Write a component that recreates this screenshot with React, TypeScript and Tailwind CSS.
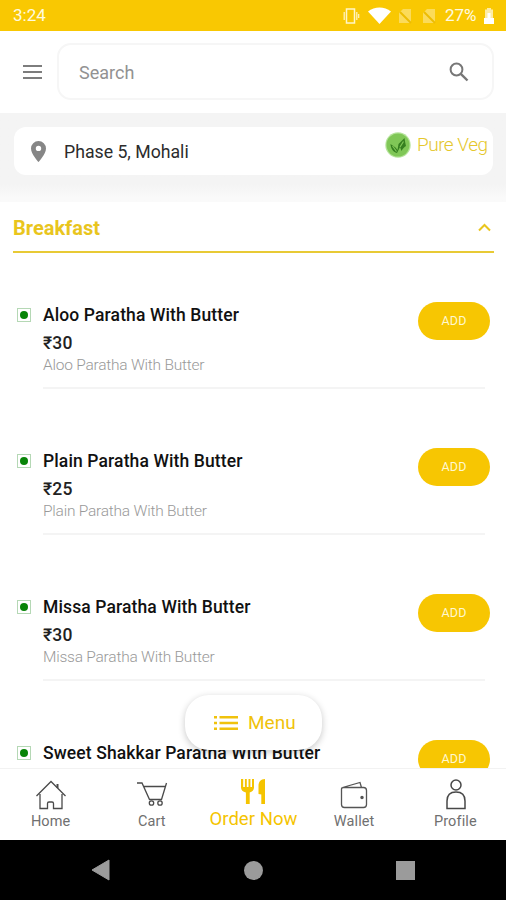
import React from 'react';

interface MenuItem {
  name: string;
  price: number;
}

interface TabProps {
  label: string;
  children: React.ReactNode;
}

const items: MenuItem[] = [
  { name: 'Aloo Paratha With Butter', price: 30 },
  { name: 'Plain Paratha With Butter', price: 25 },
  { name: 'Missa Paratha With Butter', price: 30 },
  { name: 'Sweet Shakkar Paratha With Butter', price: 35 },
];

const NoSimIcon = () => (
  <svg width="14" height="16" viewBox="0 0 14 16" className="opacity-35">
    <path d="M5 1h8v14H1V5z" fill="#fff" />
    <path d="M2 4l11 11" stroke="#d9a800" strokeWidth="2" />
  </svg>
);

const StatusBar = () => (
  <div className="flex h-[31px] shrink-0 items-center bg-[#f9c802] pl-[13px] pr-[12px] text-[17px] text-[#fffbe0]">
    <span className="w-[36px]">3:24</span>
    <div className="ml-auto flex items-center">
      <svg width="17" height="16" viewBox="0 0 17 16" fill="none" stroke="#fff6c8" strokeWidth="1.5" className="mr-[-1px]">
        <rect x="3.5" y="1" width="8" height="14" />
        <path d="M1.2 4v8M13.8 4v8M15.7 6v4" strokeWidth="1.2" />
      </svg>
      <svg width="23" height="17" viewBox="0 0 23 17" className="ml-[9px]">
        <path d="M0 4.6C6.5-.8 16.5-.8 23 4.6L11.5 17z" fill="#fff" />
      </svg>
      <span className="ml-[7px]"><NoSimIcon /></span>
      <span className="ml-[10px]"><NoSimIcon /></span>
      <span className="ml-[9px] w-[33px] whitespace-nowrap">27%</span>
      <svg width="10" height="16" viewBox="0 0 10 16" className="ml-[6px]">
        <path d="M3 0h4v1.5h2V10H1V1.5h2z" fill="#fff" opacity=".65" />
        <path d="M3.5 5h3v5H10v6H0v-6h3.5z" fill="#fff" />
      </svg>
    </div>
  </div>
);

const SearchHeader = () => (
  <div className="flex h-[82px] shrink-0 items-center pl-[23px] pr-[12px]">
    <div className="flex w-[19px] flex-col gap-[4px]">
      <div className="h-[2px] bg-[#7d7d7d]" />
      <div className="h-[2px] bg-[#7d7d7d]" />
      <div className="h-[2px] bg-[#7d7d7d]" />
    </div>
    <div className="mb-px ml-[15px] flex h-[57px] flex-1 items-center rounded-[14px] border-2 border-[#f6f6f6] pl-[20px] pr-[23px]">
      <span className="pt-px text-[18px] text-[#929292]">Search</span>
      <svg width="20" height="20" viewBox="0 0 20 20" fill="none" stroke="#777" className="ml-auto">
        <circle cx="7.5" cy="7.5" r="5.9" strokeWidth="2" />
        <path d="M11.8 11.8l6.7 6.7" strokeWidth="2.4" />
      </svg>
    </div>
  </div>
);

const LocationBar = () => (
  <div className="h-[89px] shrink-0 bg-linear-to-b from-[#f4f4f4] from-80% to-[#fafafa] to-95% pl-[14px] pr-[13px] pt-[14px]">
    <div className="flex h-[48px] items-center rounded-[12px] bg-white pl-[17px] pr-[5px]">
      <svg width="15" height="21" viewBox="0 0 15 21">
        <path d="M7.5 0A7.5 7.5 0 0 0 0 7.5C0 13 7.5 21 7.5 21S15 13 15 7.5A7.5 7.5 0 0 0 7.5 0zm0 10.1a2.7 2.7 0 1 1 0-5.4 2.7 2.7 0 0 1 0 5.4z" fill="#868686" />
      </svg>
      <span className="ml-[18px] pt-[2px] text-[17.7px] text-[#2c2c2c]">Phase 5, Mohali</span>
      <div className="mb-[12px] ml-auto flex items-center">
        <svg width="26" height="26" viewBox="0 0 26 26">
          <circle cx="13" cy="13" r="12.7" fill="#b5e39b" />
          <circle cx="13" cy="13" r="11.5" fill="#80c757" />
          <path d="M12 21C8 20 5.8 16.5 5.5 12l5 3.5L12.5 18l1-6L19.5 6c.6 3 .8 5.5 1.500 8-2 1-3.500 3-4.500 5l-1.500-4z" fill="#357f20" />
          <path d="M7.5 14l4 5.5M18.5 9.5L15 15" stroke="#80c757" strokeWidth="1.2" fill="none" />
        </svg>
        <span className="ml-[6px] w-[71px] whitespace-nowrap text-[19px] font-light tracking-[-0.5px] text-[#e5c72c]">Pure Veg</span>
      </div>
    </div>
  </div>
);

const MenuRow: React.FC<{ item: MenuItem }> = ({ item }) => (
  <div className="flex h-[145.9px] shrink-0 pl-[17px] pr-[16px]">
    <div className="mt-[8px] flex h-[14px] w-[14px] items-center justify-center border border-[#b5d8b5]">
      <div className="h-[8px] w-[8px] rounded-full bg-[#078407]" />
    </div>
    <div className="ml-[12px] h-[89px] w-[375px] border-b-2 border-[#f4f4f4] whitespace-nowrap">
      <p className="h-[29px] text-[17.5px] leading-[30px] font-medium tracking-[0.12px] text-[#111]">{item.name}</p>
      <p className="h-[26px] text-[17.5px] leading-[28px] font-medium tracking-[0.2px] text-[#222]">₹{item.price}</p>
      <p className="text-[15.5px] leading-[21px] font-light tracking-[-0.23px] text-[#999]">{item.name}</p>
    </div>
    <div className="h-[89px] w-[67px] border-b-2 border-[#f4f4f4]">
      <button className="mt-[2px] h-[38px] w-[72px] rounded-full bg-[#f7c602] pt-px text-[12.5px] tracking-[0.2px] text-[#fff8d0]">ADD</button>
    </div>
  </div>
);

const Tab: React.FC<TabProps> = ({ label, children }) => (
  <div className="flex w-1/5 flex-col items-center pt-[10px]">
    <div className="flex h-[32px] items-center">{children}</div>
    <span className="text-[14.5px] leading-[22px] tracking-[0.1px] text-[#707070]">{label}</span>
  </div>
);

const BottomTabs = () => (
  <div className="flex h-[72px] shrink-0 border-t border-[#f2f2f2] bg-white">
    <Tab label="Home">
      <svg width="32" height="32" viewBox="0 0 32 32" fill="none" stroke="#4a4a4a" strokeWidth="1.3">
        <path d="M1.5 17L16 2.5 30.5 17M5 15v14.5h7.5v-5q0-1.5 1.5-1.5h3q1.5 0 1.5 1.5v5H27V15" />
        <path d="M22.5 9V5" strokeWidth="2" />
      </svg>
    </Tab>
    <Tab label="Cart">
      <svg width="32" height="32" viewBox="0 0 32 32" fill="none" stroke="#4a4a4a" strokeWidth="1.3">
        <path d="M1 4h5l7.500 16.5h12L30.5 4M7.5 7.5h21.7" />
        <circle cx="15.5" cy="24" r="2.2" />
        <circle cx="24" cy="24" r="2.2" />
      </svg>
    </Tab>
    <div className="flex w-1/5 flex-col items-center pt-[9px] text-[#f5c400]">
      <svg width="26" height="28" viewBox="0 0 26 28" fill="currentColor">
        <path d="M1 1h2.2v8h1.7V1h1.9v8h1.7V1h1.9v8H12V1h2v8.500c0 2.800-1.800 4.300-4.300 5V26H5.900V14.500C2.800 13.800 1 12.300 1 9.500z" />
        <path d="M25 1v25h-3.700v-9.500L18.5 16V8C18.500 4 20.500 1 25 1z" />
      </svg>
      <span className="pl-px text-[18.5px] leading-[26px] tracking-[0.05px] whitespace-nowrap">Order Now</span>
    </div>
    <Tab label="Wallet">
      <svg width="28" height="30" viewBox="0 0 28 30" fill="none" stroke="#555" strokeWidth="1.3">
        <path d="M1.5 9v15.500q0 3 3 3h19q3 0 3-3v-14q0-3-3-3H3.500Q1.500 7.500 1.500 9M2.500 7.500L20 2.500l1.500 5" />
        <circle cx="22" cy="17.5" r="1.1" fill="#555" />
      </svg>
    </Tab>
    <Tab label="Profile">
      <svg width="22" height="32" viewBox="0 0 22 32" fill="none" stroke="#484848" strokeWidth="1.5" className="ml-px">
        <circle cx="11" cy="6" r="5" />
        <path d="M2 29.5V22c0-6 3.500-9 9-9s9 3 9 9v7.500z" />
      </svg>
    </Tab>
  </div>
);

const SystemNav = () => (
  <div className="flex h-[60px] shrink-0 items-center bg-black">
    <svg width="19" height="22" viewBox="0 0 19 22" className="ml-[91px]">
      <path d="M18 1v20L1 11z" fill="#9b9b9b" stroke="#9b9b9b" strokeLinejoin="round" />
    </svg>
    <div className="ml-[134px] h-[19px] w-[19px] rounded-full bg-[#9b9b9b]" />
    <div className="ml-[133px] h-[19px] w-[19px] bg-[#9b9b9b]" />
  </div>
);

export default function App() {
  return (
    <div className="relative flex h-[900px] w-[506px] flex-col overflow-hidden bg-white font-[Roboto,sans-serif]">
      <StatusBar />
      <SearchHeader />
      <LocationBar />
      <div className="min-h-0 flex-1 overflow-hidden">
        <div className="ml-[13px] mr-[12px] flex h-[51px] items-center justify-between border-b-2 border-[#e8ca35] pr-[3px] text-[#e9c51d]">
          <h2 className="pt-[2px] text-[20px] font-bold">Breakfast</h2>
          <svg width="13" height="9" viewBox="0 0 13 9" fill="none" stroke="currentColor" strokeWidth="2" className="mt-px">
            <path d="M1 7.5L6.5 2 12 7.5" />
          </svg>
        </div>
        <div className="flex flex-col pt-[47px]">
          {items.map((item) => (
            <MenuRow key={item.name} item={item} />
          ))}
        </div>
      </div>
      <BottomTabs />
      <SystemNav />

      {/* Floating category menu button */}
      <button className="absolute left-[185px] top-[695px] flex h-[55px] w-[137px] items-center rounded-[24px] bg-white pl-[29px] text-[#f0c20c] shadow-[0_2px_7px_rgba(0,0,0,0.22)]">
        <svg width="24" height="16" viewBox="0 0 24 16" fill="currentColor">
          <path d="M0 1h3v2.5H0zM5.5 1H24v2.5H5.5zM0 6.7h3v2.5H0zM5.5 6.7H24v2.5H5.5zM0 12.4h3v2.5H0zM5.5 12.4H24v2.5H5.5z" />
        </svg>
        <span className="ml-[10px] pt-px text-[19px]">Menu</span>
      </button>
    </div>
  );
}
